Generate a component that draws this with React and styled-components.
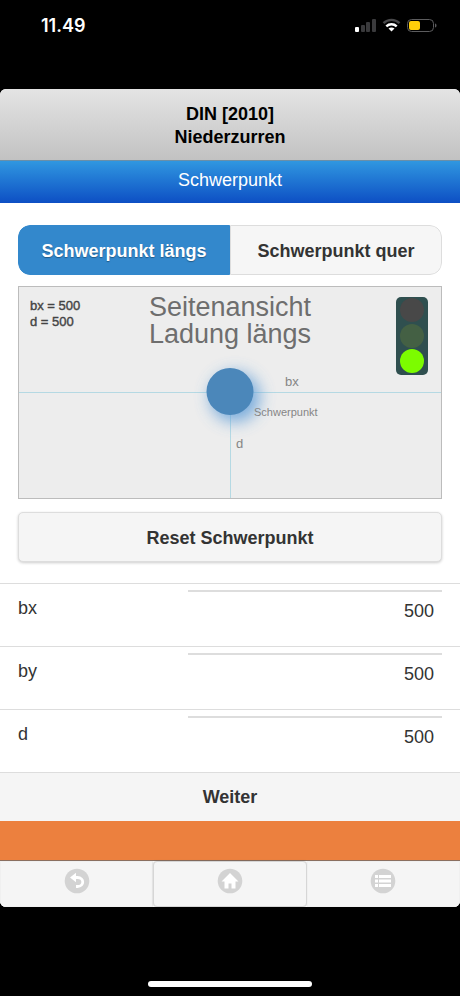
import React, { useState } from 'react'
import styled, { createGlobalStyle } from 'styled-components';

const GlobalStyle = createGlobalStyle`
* {
    box-sizing: border-box;
  }
  body {
    margin: 0;
    background: #000;
    font-family: "Liberation Sans", Arial, sans-serif;
    font-size: 18px;
    color: #333;
  }
`

const StatusBar = () => {
    return (
        <Status>
            <Clock>11.49</Clock>
            <StatusIcons width="84" height="16" viewBox="0 0 84 16">
                <rect x="1" y="9" width="4" height="5" rx="1" fill="#fff" />
                <rect x="7" y="7" width="4" height="7" rx="1" fill="#3a3a3c" />
                <rect x="12" y="4" width="4" height="10" rx="1" fill="#3a3a3c" />
                <rect x="18" y="1" width="4" height="13" rx="1" fill="#3a3a3c" />
                <g fill="none" strokeWidth="2.4">
                    <path d="M29.5 5.2C34 0.8 41 0.8 45.5 5.2" stroke="#48484a" />
                    <path d="M32.3 8.3C35.2 5.5 39.8 5.5 42.7 8.3" stroke="#fff" />
                </g>
                <path d="M34.5 10.6C36.3 9.1 38.7 9.1 40.5 10.6L37.5 13.6Z" fill="#fff" />
                <rect x="53.5" y="1.5" width="26" height="12" rx="4" fill="none" stroke="#5c5c5e" />
                <rect x="55" y="3" width="11" height="9" rx="2" fill="#ffcf0a" />
                <path d="M81 5.5C83 6 83 9 81 9.5Z" fill="#5c5c5e" />
            </StatusIcons>
        </Status>
    )
}

const Diagram = ({ bx, d }) => {
    return (
        <Drawing viewBox="0 0 424 213" role="img" aria-label="Seitenansicht Ladung längs">
            <defs>
                <filter id="glow" x="-60%" y="-60%" width="240%" height="240%">
                    <feGaussianBlur stdDeviation="8" />
                </filter>
            </defs>
            <rect x="0.5" y="0.5" width="423" height="212" fill="#ededed" stroke="#bcbcbc" />
            <g stroke="#b5d9e3">
                <line x1="1" y1="106.5" x2="423" y2="106.5" />
                <line x1="212.5" y1="106" x2="212.5" y2="212" />
            </g>
            <circle cx="217" cy="111" r="25" fill="#5b9bd8" opacity="0.8" filter="url(#glow)" />
            <circle cx="212" cy="105.5" r="23.5" fill="#4b87ba" />
            <g fill="#444" stroke="#444" strokeWidth="0.4" fontSize="13">
                <text x="12" y="24">bx = {bx}</text>
                <text x="12" y="40">d = {d}</text>
            </g>
            <g fill="#6e6e6e" fontSize="27" textAnchor="middle">
                <text x="212" y="30">Seitenansicht</text>
                <text x="212" y="57">Ladung längs</text>
            </g>
            <g fill="#858585" fontSize="13">
                <text x="267" y="100">bx</text>
                <text x="218" y="162">d</text>
                <text x="236" y="130" fontSize="11">Schwerpunkt</text>
            </g>
            <rect x="378" y="11" width="32" height="78" rx="5" fill="#2f4f4f" />
            <circle cx="394" cy="24" r="12" fill="#484848" />
            <circle cx="394" cy="50" r="12" fill="#446044" />
            <circle cx="394" cy="75" r="12" fill="#7cfc00" />
        </Drawing>
    )
}

const BackIcon = () => (
    <svg width="26" height="26" viewBox="0 0 26 26">
        <circle cx="13" cy="13" r="12.3" fill="#d3d3d3" />
        <path d="M10 9.5H13.5C20.5 9.5 20.5 18.5 13.5 18.5H12" fill="none" stroke="#fff" strokeWidth="2.8" />
        <path d="M6 9.5L12 4.8V14.2Z" fill="#fff" />
    </svg>
)

const HomeIcon = () => (
    <svg width="26" height="26" viewBox="0 0 26 26">
        <circle cx="13" cy="13" r="12.3" fill="#d3d3d3" />
        <path d="M13 5L4.5 13.5H7.5V20.5H11.5V15.5H14.5V20.5H18.5V13.5H21.5Z" fill="#fff" />
    </svg>
)

const ListIcon = () => (
    <svg width="26" height="26" viewBox="0 0 26 26">
        <circle cx="13" cy="13" r="12.3" fill="#d3d3d3" />
        <g fill="#fff">
            <rect x="5" y="7" width="3" height="3" />
            <rect x="9" y="7" width="12" height="3" />
            <rect x="5" y="11.5" width="3" height="3" />
            <rect x="9" y="11.5" width="12" height="3" />
            <rect x="5" y="16" width="3" height="3" />
            <rect x="9" y="16" width="12" height="3" />
        </g>
    </svg>
)

const App = () => {
    const [view, setView] = useState('laengs')
    const [values, setValues] = useState({ bx: '500', by: '500', d: '500' })

    const reset = () => setValues({ bx: '500', by: '500', d: '500' })

    return (
        <Screen>
            <GlobalStyle />
            <StatusBar />
            <Page>
                <Header>DIN [2010]<br />Niederzurren</Header>
                <SubHeader>Schwerpunkt</SubHeader>
                <Content>
                    <Tabs>
                        <Tab type="button" $active={view === 'laengs'} onClick={() => setView('laengs')}>Schwerpunkt längs</Tab>
                        <Tab type="button" $active={view === 'quer'} onClick={() => setView('quer')}>Schwerpunkt quer</Tab>
                    </Tabs>
                    <Diagram bx={values.bx} d={values.d} />
                    <ResetButton type="button" onClick={reset}>Reset Schwerpunkt</ResetButton>
                </Content>
                {['bx', 'by', 'd'].map((name) => (
                    <Row key={name}>
                        <Label htmlFor={name}>{name}</Label>
                        <Field
                            id={name}
                            value={values[name]}
                            inputMode="numeric"
                            onChange={(e) => setValues({ ...values, [name]: e.target.value })}
                        />
                    </Row>
                ))}
                <NextButton type="button">Weiter</NextButton>
                <Banner />
                <NavBar>
                    <NavButton type="button" aria-label="Zurück"><BackIcon /></NavButton>
                    <NavButton type="button" aria-label="Home" $framed><HomeIcon /></NavButton>
                    <NavButton type="button" aria-label="Menü"><ListIcon /></NavButton>
                </NavBar>
            </Page>
            <HomeArea>
                <HomeIndicator />
            </HomeArea>
        </Screen>
    )
}

const Screen = styled.div`
    display: flex;
    flex-direction: column;
    min-height: 100vh;
    background: #000;
`
const Status = styled.div`
    display: flex;
    justify-content: space-between;
    align-items: flex-start;
    height: 89px;
    padding: 15px 22px 0 41px;
`
const Clock = styled.span`
    font-family: Inter, sans-serif;
    font-size: 18px;
    line-height: 22px;
    font-weight: 600;
    color: #fff;
`
const StatusIcons = styled.svg`
    margin-top: 3px;
`
const Page = styled.main`
    background: #fff;
    border-radius: 6px;
    overflow: hidden;
`
const Header = styled.h1`
    margin: 0;
    padding: 14px 0 11px;
    font-size: 18px;
    line-height: 23px;
    font-weight: 700;
    text-align: center;
    color: #000;
    background: linear-gradient(#e4e4e4, #c2c2c2);
`
const SubHeader = styled.h2`
    margin: 0;
    padding: 8px 0 12px;
    font-size: 18px;
    line-height: 22px;
    font-weight: 400;
    text-align: center;
    color: #fff;
    border-top: 1px solid #6a8fa8;
    background: linear-gradient(#3097e0, #0d4fc4);
`
const Content = styled.section`
    display: flex;
    flex-direction: column;
    padding: 22px 18px 21px;
`
const Tabs = styled.div`
    display: flex;
    margin-bottom: 11px;
    border-radius: 12px;
    overflow: hidden;
`
const Tab = styled.button`
    flex: 1;
    height: 50px;
    padding: 2px 0 0;
    font-family: inherit;
    font-size: 18px;
    font-weight: 700;
    color: ${(props) => (props.$active ? '#fff' : '#333')};
    text-shadow: ${(props) => (props.$active ? '0 1px 1px #205a88' : 'none')};
    background: ${(props) => (props.$active ? '#3388cc' : '#f6f6f6')};
    border: 1px solid ${(props) => (props.$active ? '#3388cc' : '#ddd')};
    &:first-child {
        border-radius: 12px 0 0 12px;
    }
    &:last-child {
        border-radius: 0 12px 12px 0;
    }
`
const Drawing = styled.svg`
    display: block;
    width: 100%;
    margin-bottom: 13px;
    font-family: "Liberation Sans", Arial, sans-serif;
`
const ResetButton = styled.button`
    height: 50px;
    padding: 2px 0 0;
    font-family: inherit;
    font-size: 18px;
    font-weight: 700;
    color: #333;
    background: #f5f5f5;
    border: 1px solid #ddd;
    border-radius: 5px;
    box-shadow: 0 1px 3px rgba(0, 0, 0, 0.2);
`
const Row = styled.div`
    display: flex;
    justify-content: space-between;
    align-items: flex-start;
    height: 63px;
    padding: 6px 18px 0;
    border-top: 1px solid #ddd;
`
const Label = styled.label`
    padding-top: 7px;
    line-height: 22px;
`
const Field = styled.input`
    width: 60%;
    height: 40px;
    padding: 0 8px;
    font-family: inherit;
    font-size: 18px;
    text-align: right;
    color: #333;
    background: transparent;
    border: 0;
    border-top: 2px solid #ddd;
    border-radius: 0;
    outline: none;
`
const NextButton = styled.button`
    display: block;
    width: 100%;
    height: 49px;
    font-family: inherit;
    font-size: 18px;
    font-weight: 700;
    color: #333;
    background: #f5f5f5;
    border: 0;
    border-top: 1px solid #ddd;
`
const Banner = styled.div`
    height: 40px;
    background: #ec803e;
    border-bottom: 1px solid #8a6f60;
`
const NavBar = styled.nav`
    display: flex;
`
const NavButton = styled.button`
    display: flex;
    flex: 1;
    justify-content: center;
    height: 46px;
    padding: 6px 0 0;
    background: #f5f5f5;
    border: 1px solid ${(props) => (props.$framed ? '#d6d6d6' : '#f0f0f0')};
    border-radius: ${(props) => (props.$framed ? '4px' : '0')};
    box-shadow: ${(props) => (props.$framed ? '0 0 2px rgba(0, 0, 0, 0.2)' : 'none')};
`
const HomeArea = styled.div`
    display: flex;
    flex: 1;
    justify-content: center;
    align-items: flex-end;
    padding-bottom: 9px;
`
const HomeIndicator = styled.div`
    width: 164px;
    height: 6px;
    border-radius: 3px;
    background: #fff;
`
export default App;
